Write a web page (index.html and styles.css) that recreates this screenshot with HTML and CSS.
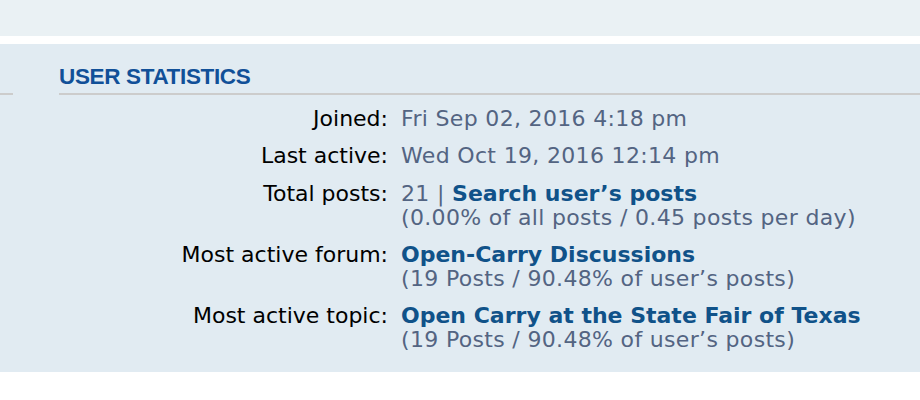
FILE: index.html
```html
<!DOCTYPE html>
<html lang="en">
<head>
<meta charset="utf-8">
<title>User statistics</title>
<link rel="stylesheet" href="styles.css">
</head>
<body>
<div class="top-panel"></div>
<div class="stats-panel">
  <div class="heading-row">
    <span class="stub"></span>
    <h3 class="heading">User statistics</h3>
  </div>
  <dl class="details">
    <dt>Joined:</dt>
    <dd>Fri Sep 02, 2016 4:18 pm</dd>
    <dt>Last active:</dt>
    <dd>Wed Oct 19, 2016 12:14 pm</dd>
    <dt>Total posts:</dt>
    <dd>21 | <a href="#">Search user’s posts</a><br>(0.00% of all posts / 0.45 posts per day)</dd>
    <dt>Most active forum:</dt>
    <dd><a href="#">Open-Carry Discussions</a><br>(19 Posts / 90.48% of user’s posts)</dd>
    <dt>Most active topic:</dt>
    <dd><a href="#">Open Carry at the State Fair of Texas</a><br>(19 Posts / 90.48% of user’s posts)</dd>
  </dl>
</div>
</body>
</html>
```

FILE: styles.css
```css
html, body {
  margin: 0;
  padding: 0;
  background: #ffffff;
}

body {
  font-family: "DejaVu Sans", Verdana, sans-serif;
}

.top-panel {
  height: 36px;
  background: #EAF1F4;
}

.stats-panel {
  margin-top: 8px;
  background: #E1EBF2;
  padding: 21px 0 20px 0;
}

.heading-row {
  display: flex;
  align-items: flex-end;
}

.stub {
  width: 13px;
  flex: none;
  border-bottom: 2px solid #CCCCCC;
}

.heading {
  flex: 1;
  margin: 0 0 0 46px;
  padding: 0 0 4px 0;
  font-family: "Liberation Sans", Arial, sans-serif;
  font-weight: bold;
  font-size: 22.5px;
  line-height: 24px;
  letter-spacing: -0.35px;
  text-transform: uppercase;
  color: #115098;
  border-bottom: 2px solid #CCCCCC;
}

.details {
  display: grid;
  grid-template-columns: 388px 1fr;
  column-gap: 13px;
  row-gap: 13.3px;
  margin: 12px 0 0 0;
  font-size: 22px;
  line-height: 24px;
}

.details dt {
  text-align: right;
  color: #000000;
}

.details dd {
  margin: 0;
  color: #536482;
  letter-spacing: 0.33px;
}

.details a {
  color: #105289;
  font-weight: bold;
  text-decoration: none;
  letter-spacing: 0;
}
```
